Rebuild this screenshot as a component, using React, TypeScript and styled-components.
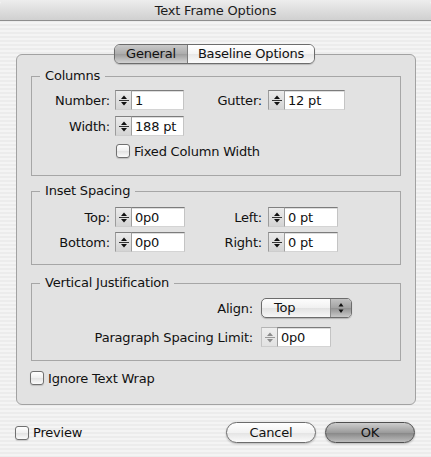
import React from 'react'
import styled, { createGlobalStyle } from 'styled-components'

const FONT = `'DejaVu Sans', 'Liberation Sans', sans-serif`

const GlobalStyle = createGlobalStyle`
  html, body {
    margin: 0;
    padding: 0;
    background: #ffffff;
  }
`

// Window chrome

const Window = styled.div`
  width: 431px;
  height: 457px;
  display: flex;
  flex-direction: column;
  overflow: hidden;
  background: repeating-linear-gradient(
    to bottom,
    #ececec 0,
    #ececec 2px,
    #f4f4f4 2px,
    #f4f4f4 4px
  );
  font-family: ${FONT};
  font-size: 13px;
  letter-spacing: -0.2px;
  color: #111;
`

const TitleBar = styled.div`
  flex: none;
  box-sizing: border-box;
  height: 21px;
  display: flex;
  align-items: center;
  justify-content: center;
  border-bottom: 1px solid #8e8e8e;
  border-radius: 5px 5px 0 0;
  background: linear-gradient(#ededed, #d0d0d0);
  color: #1c1c1c;
`

const Body = styled.div`
  flex: 1;
  display: flex;
  flex-direction: column;
  padding: 23px 15px 0 16px;
`

// Tab control

const TabRow = styled.div`
  position: relative;
  z-index: 1;
  display: flex;
  justify-content: center;
  margin-bottom: -10px;
  padding-right: 3px;
`

const Tabs = styled.div`
  display: flex;
  box-sizing: border-box;
  height: 20px;
  border: 1px solid #6c6c6c;
  border-radius: 6px;
  overflow: hidden;
  box-shadow: 0 1px 1px rgba(0, 0, 0, 0.18);
`

const Tab = styled.div<{ $active?: boolean; $width: number }>`
  width: ${p => p.$width}px;
  text-align: center;
  line-height: 18px;
  background: ${p =>
    p.$active
      ? 'linear-gradient(#c9c9c9, #acacac 50%, #9d9d9d 51%, #d2d2d2)'
      : 'linear-gradient(#ffffff, #f4f4f4 50%, #e7e7e7 51%, #fbfbfb)'};

  & + & {
    border-left: 1px solid #7c7c7c;
  }
`

// Tab panel and groups

const Panel = styled.div`
  box-sizing: border-box;
  height: 351px;
  padding: 13px 14px 0 14px;
  border: 1px solid #a2a2a2;
  border-radius: 6px;
  background: #e2e2e2;
  display: flex;
  flex-direction: column;
`

const Group = styled.fieldset<{ $pad: string; $gap: number; $top: number }>`
  margin: ${p => p.$top}px 0 0 0;
  padding: ${p => p.$pad};
  min-width: 0;
  border: 1px solid #a6a6a6;
  display: flex;
  flex-direction: column;
  gap: ${p => p.$gap}px;
`

const Legend = styled.legend`
  margin-left: 8px;
  padding: 0 5px;
  line-height: 16px;
`

const Row = styled.div<{ $gap?: number }>`
  display: flex;
  align-items: center;
  height: 20px;
  gap: ${p => p.$gap ?? 0}px;
`

const Cell = styled.div`
  display: flex;
  align-items: center;
`

const Label = styled.label<{ $width: number; $gap: number }>`
  width: ${p => p.$width}px;
  margin-right: ${p => p.$gap}px;
  text-align: right;
  white-space: nowrap;
`

// Controls

const SpinBox = styled.span<{ $disabled?: boolean }>`
  box-sizing: border-box;
  width: 16px;
  height: 20px;
  display: flex;
  align-items: center;
  justify-content: center;
  border-top: 1px solid ${p => (p.$disabled ? '#b4b4b4' : '#808080')};
  border-left: 1px solid ${p => (p.$disabled ? '#c2c2c2' : '#9c9c9c')};
  border-bottom: 1px solid #cdcdcd;
  background: ${p =>
    p.$disabled
      ? 'linear-gradient(#eeeeee, #e2e2e2)'
      : 'linear-gradient(#ebebeb, #d4d4d4)'};
`

const Field = styled.input<{ $width: number }>`
  box-sizing: border-box;
  width: ${p => p.$width}px;
  height: 20px;
  margin: 0;
  padding: 0 3px;
  border: 1px solid;
  border-color: #7c7c7c #c4c4c4 #d4d4d4 #9e9e9e;
  background: #ffffff;
  box-shadow: inset 0 1px 0 #dddddd;
  font: inherit;
  letter-spacing: inherit;
  color: #111;
  outline: none;
`

const Popup = styled.div`
  box-sizing: border-box;
  width: 91px;
  height: 20px;
  display: flex;
  overflow: hidden;
  border: 1px solid #6c6c6c;
  border-radius: 5px;
  background: linear-gradient(#fdfdfd, #f1f1f1 48%, #e2e2e2 52%, #f7f7f7);
  box-shadow: 0 1px 1px rgba(0, 0, 0, 0.2);
`

const PopupText = styled.span`
  flex: 1;
  padding-left: 12px;
  line-height: 18px;
`

const PopupArrows = styled.span`
  width: 20px;
  display: flex;
  align-items: center;
  justify-content: center;
  border-left: 1px solid #8a8a8a;
  background: linear-gradient(#c2c2c2, #a2a2a2 50%, #929292 51%, #c8c8c8);
`

const Check = styled.label<{ $indent?: number }>`
  display: flex;
  align-items: center;
  gap: 4px;
  height: 16px;
  margin-left: ${p => p.$indent ?? 0}px;
  white-space: nowrap;
`

const Box = styled.span`
  box-sizing: border-box;
  width: 14px;
  height: 14px;
  border: 1px solid #707070;
  border-radius: 3px;
  background: linear-gradient(#ffffff, #efefef 50%, #e2e2e2 51%, #fbfbfb);
  box-shadow: 0 1px 1px rgba(0, 0, 0, 0.15);
`

const Footer = styled.div`
  display: flex;
  align-items: center;
  margin-top: 17px;
  padding-left: 0;
  gap: 9px;
`

const Spacer = styled.div`
  flex: 1;
`

const Button = styled.button<{ $default?: boolean }>`
  box-sizing: border-box;
  width: 90px;
  height: 21px;
  margin: 0;
  padding: 0;
  border-radius: 11px;
  border: 1px solid ${p => (p.$default ? '#4f4f4f' : '#6c6c6c')};
  background: ${p =>
    p.$default
      ? 'linear-gradient(#cdcdcd, #9c9c9c 50%, #868686 51%, #bcbcbc)'
      : 'linear-gradient(#ffffff, #f2f2f2 50%, #e3e3e3 51%, #fbfbfb)'};
  box-shadow: 0 1px 2px rgba(0, 0, 0, 0.25);
  font: inherit;
  letter-spacing: inherit;
  color: #111;
`

const FooterCheck = styled(Check)`
  margin-left: -1px;
`

// Icons

const SpinArrows: React.FC<{ disabled?: boolean }> = ({ disabled }) => {
  const c = disabled ? '#8c8c8c' : '#111'
  return (
    <svg width='14' height='18' viewBox='0 0 14 18'>
      <path d='M4 8 L10 8 L7 4.5 Z' fill={c} />
      <rect x='2' y='9' width='10' height='1' fill={disabled ? '#999' : '#333'} />
      <path d='M4 11 L10 11 L7 14.5 Z' fill={c} />
    </svg>
  )
}

const UpDown = () => (
  <svg width='8' height='14' viewBox='0 0 8 14'>
    <path d='M1.5 5.5 L6.5 5.5 L4 2 Z' fill='#111' />
    <path d='M1.5 8.5 L6.5 8.5 L4 12 Z' fill='#111' />
  </svg>
)

interface SpinFieldProps {
  label: string
  value: string
  labelWidth: number
  fieldWidth: number
  gap?: number
  disabled?: boolean
}

const SpinField: React.FC<SpinFieldProps> = ({
  label,
  value,
  labelWidth,
  fieldWidth,
  gap = 5,
  disabled,
}) => (
  <Cell>
    <Label $width={labelWidth} $gap={gap}>
      {label}
    </Label>
    <SpinBox $disabled={disabled}>
      <SpinArrows disabled={disabled} />
    </SpinBox>
    <Field $width={fieldWidth} defaultValue={value} readOnly />
  </Cell>
)

const App: React.FC = () => (
  <Window>
    <GlobalStyle />
    <TitleBar>Text Frame Options</TitleBar>
    <Body>
      <TabRow>
        <Tabs>
          <Tab $active $width={72}>
            General
          </Tab>
          <Tab $width={126}>Baseline Options</Tab>
        </Tabs>
      </TabRow>
      <Panel>
        <Group $top={0} $pad='6px 0 16px 0' $gap={6}>
          <Legend>Columns</Legend>
          <Row>
            <SpinField label='Number:' value='1' labelWidth={78} fieldWidth={53} />
            <SpinField label='Gutter:' value='12 pt' labelWidth={78} fieldWidth={61} gap={6} />
          </Row>
          <Row>
            <SpinField label='Width:' value='188 pt' labelWidth={78} fieldWidth={53} />
          </Row>
          <Check $indent={84} style={{ marginTop: 1 }}>
            <Box />
            Fixed Column Width
          </Check>
        </Group>

        <Group $top={7} $pad='8px 0 12px 0' $gap={5}>
          <Legend>Inset Spacing</Legend>
          <Row>
            <SpinField label='Top:' value='0p0' labelWidth={78} fieldWidth={54} />
            <SpinField label='Left:' value='0 pt' labelWidth={77} fieldWidth={54} gap={6} />
          </Row>
          <Row>
            <SpinField label='Bottom:' value='0p0' labelWidth={78} fieldWidth={54} />
            <SpinField label='Right:' value='0 pt' labelWidth={77} fieldWidth={54} gap={6} />
          </Row>
        </Group>

        <Group $top={10} $pad='7px 0 13px 0' $gap={9}>
          <Legend>Vertical Justification</Legend>
          <Row>
            <Cell>
              <Label $width={221} $gap={8}>
                Align:
              </Label>
              <Popup>
                <PopupText>Top</PopupText>
                <PopupArrows>
                  <UpDown />
                </PopupArrows>
              </Popup>
            </Cell>
          </Row>
          <Row>
            <SpinField
              label='Paragraph Spacing Limit:'
              value='0p0'
              labelWidth={221}
              fieldWidth={54}
              gap={8}
              disabled
            />
          </Row>
        </Group>

        <Check $indent={-1} style={{ marginTop: 9 }}>
          <Box />
          Ignore Text Wrap
        </Check>
      </Panel>

      <Footer>
        <FooterCheck>
          <Box />
          Preview
        </FooterCheck>
        <Spacer />
        <Button>Cancel</Button>
        <Button $default style={{ marginRight: 1 }}>
          OK
        </Button>
      </Footer>
    </Body>
  </Window>
)

export default App
